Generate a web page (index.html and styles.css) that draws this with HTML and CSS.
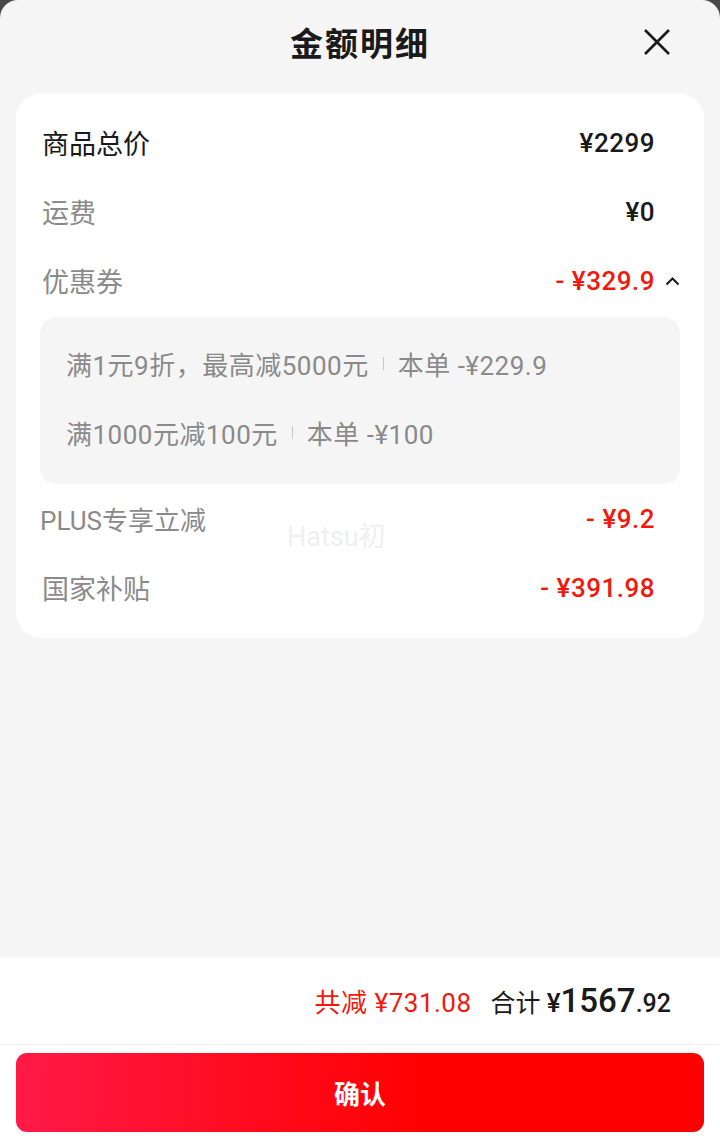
FILE: index.html
```html
<!DOCTYPE html>
<html lang="zh-CN">
<head>
<meta charset="utf-8" />
<title>金额明细</title>
<link rel="stylesheet" href="styles.css">
</head>
<body>
<div class="sheet">
  <div class="sheet-head">
    <span class="sheet-title">金额明细</span>
    <svg class="close" width="28" height="28" viewBox="0 0 28 28"><path d="M2 2L26 26M26 2L2 26" stroke="#1a1a1a" stroke-width="2.6" fill="none" /></svg>
  </div>

  <div class="card">
    <div class="row">
      <span class="label dark">商品总价</span>
      <span class="value">¥2299</span>
      <span class="slot"></span>
    </div>
    <div class="row">
      <span class="label">运费</span>
      <span class="value">¥0</span>
      <span class="slot"></span>
    </div>
    <div class="row">
      <span class="label">优惠券</span>
      <span class="value red">- ¥329.9</span>
      <span class="slot"><svg width="15" height="10" viewBox="0 0 15 10"><path d="M1.5 8.5L7.5 2.5L13.5 8.5" stroke="#1a1a1a" stroke-width="2" fill="none" /></svg></span>
    </div>
    <div class="coupons">
      <div class="coupon">满1元9折，最高减5000元<i class="sep"></i>本单 -¥229.9</div>
      <div class="coupon">满1000元减100元<i class="sep"></i>本单 -¥100</div>
    </div>
    <div class="row">
      <span class="label plus">PLUS专享立减</span>
      <span class="value red">- ¥9.2</span>
      <span class="slot"></span>
    </div>
    <div class="row">
      <span class="label">国家补贴</span>
      <span class="value red">- ¥391.98</span>
      <span class="slot"></span>
    </div>
    <span class="watermark">Hatsu初</span>
  </div>

  <div class="footer">
    <div class="totals">
      <span class="saved">共减 ¥731.08</span>
      <span class="sum">合计 <b class="yen">¥</b><b class="big">1567</b><b class="cents">.92</b></span>
    </div>
    <div class="btn-wrap">
      <div class="confirm">确认</div>
    </div>
  </div>
</div>
</body>
</html>
```

FILE: styles.css
```css
html, body{margin:0; padding:0;}
body{background:#4a4a4a; font-family:Roboto, "Noto Sans CJK SC", sans-serif; color:#1a1a1a;}
.sheet{min-height:1138px; background:#f5f5f5; border-radius:18px 18px 0 0; display:flex; flex-direction:column;}

.sheet-head{height:84px; position:relative; display:flex; align-items:center; justify-content:center;}
.sheet-title{font-size:33px; font-weight:700; letter-spacing:2px;}
.close{position:absolute; right:49px; top:28px;}

.card{position:relative; margin:9px 16px 0; padding:15px 0 16px; background:#fff; border-radius:26px;}
.row{height:69px; display:flex; align-items:center; padding:0 24px 0 26px;}
.label{flex:1; font-size:27px; color:#8a8a8a;}
.label.dark{color:#1a1a1a;}
.label.plus{margin-left:-2px; font-size:26px;}
.value{font-size:26px; font-weight:500; letter-spacing:0.5px;}
.value.red{color:#f3170c;}
.slot{width:25px; display:flex; justify-content:flex-end; align-items:center;}

.coupons{margin:2px 24px 0; padding:12px 26px 17px; background:#f5f5f5; border-radius:16px;}
.coupon{height:69px; display:flex; align-items:center; font-size:26px; letter-spacing:0.5px; color:#8a8a8a;}
.sep{display:inline-block; width:1px; height:13px; background:#c8c8c8; margin:0 14px;}

.watermark{position:absolute; left:271px; top:422px; font-size:27px; color:#efefef;}

.footer{margin-top:auto; background:#fff;}
.totals{height:88px; display:flex; justify-content:flex-end; align-items:baseline; padding:0 49px 0 0; box-sizing:border-box; border-bottom:1px solid #f2f2f2;}
.totals > span{line-height:88px;}
.saved{font-size:26px; letter-spacing:0.5px; color:#f3170c; margin-right:19px;}
.sum{font-size:25px;}
.sum b{font-weight:500;}
.yen{font-size:26px;}
.big{font-size:33px;}
.cents{font-size:25px;}

.btn-wrap{padding:8px 16px 6px;}
.confirm{height:79px; border-radius:11px; background:linear-gradient(90deg, #ff1a47, #ff0000 60%); color:#fff; font-size:26px; font-weight:700; display:flex; align-items:center; justify-content:center;}
```
